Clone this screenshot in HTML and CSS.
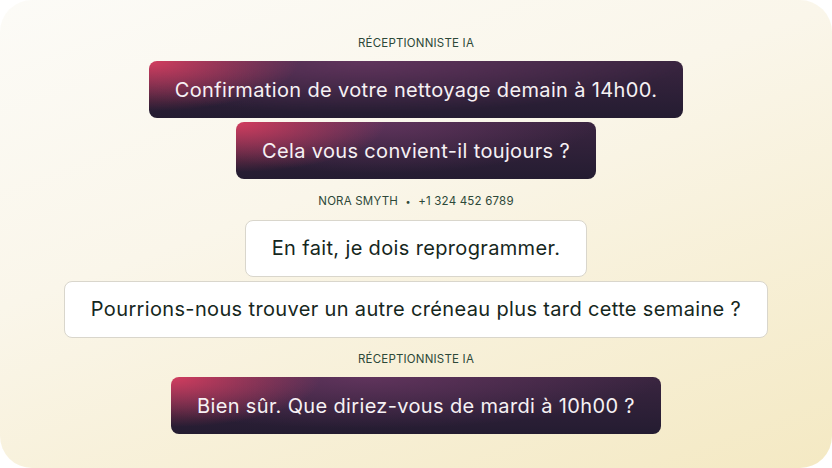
FILE: index.html
```html
<!DOCTYPE html>
<html lang="fr">
<head>
  <meta charset="UTF-8">
  <meta name="viewport" content="width=device-width, initial-scale=1.0">
  <title>Réceptionniste IA</title>
  <link rel="stylesheet" href="styles.css">
</head>
<body>

  <div class="chat">
    <div class="groupe">
      <div class="auteur">Réceptionniste IA</div>
      <div class="bulle ia">Confirmation de votre nettoyage demain à 14h00.</div>
      <div class="bulle ia">Cela vous convient-il toujours ?</div>
    </div>

    <div class="groupe">
      <div class="auteur">Nora Smyth <span class="point">•</span> +1 324 452 6789</div>
      <div class="bulle client">En fait, je dois reprogrammer.</div>
      <div class="bulle client">Pourrions-nous trouver un autre créneau plus tard cette semaine ?</div>
    </div>

    <div class="groupe">
      <div class="auteur">Réceptionniste IA</div>
      <div class="bulle ia">Bien sûr. Que diriez-vous de mardi à 10h00 ?</div>
    </div>
  </div>

</body>
</html>
```

FILE: styles.css
```css
body {
  margin: 0;
  background: #ffffff;
  font-family: 'Inter', 'Lato', sans-serif;
}

.chat {
  width: 832px;
  height: 468px;
  box-sizing: border-box;
  border-radius: 32px;
  background: linear-gradient(160deg, #fcfbf7 0%, #faf6ea 40%, #f4e9c3 100%);
  padding-top: 35px;
  display: flex;
  flex-direction: column;
  align-items: center;
  gap: 13.5px;
}

.groupe {
  display: flex;
  flex-direction: column;
  align-items: center;
  gap: 4px;
}

.auteur {
  font-size: 11.5px;
  line-height: 16px;
  letter-spacing: 0.2px;
  text-transform: uppercase;
  color: #2d4838;
  margin-bottom: 6px;
}

.point {
  margin: 0 4px;
  font-size: 9px;
}

.bulle {
  box-sizing: border-box;
  height: 57px;
  padding: 0 26px;
  display: flex;
  align-items: center;
  font-size: 20px;
  letter-spacing: 0.35px;
  border-radius: 8px;
  white-space: nowrap;
}

.ia {
  color: #f6f1f4;
  background:
    radial-gradient(150px 50px at 0 0, rgba(218, 62, 96, 0.95), rgba(218, 62, 96, 0)),
    radial-gradient(60% 90% at 40% 0, rgba(112, 58, 104, 0.7), rgba(112, 58, 104, 0)),
    linear-gradient(180deg, #3a2540 0%, #241c31 100%);
}

.client {
  color: #16271d;
  background: #ffffff;
  border: 1px solid #d9d6cc;
}
```
